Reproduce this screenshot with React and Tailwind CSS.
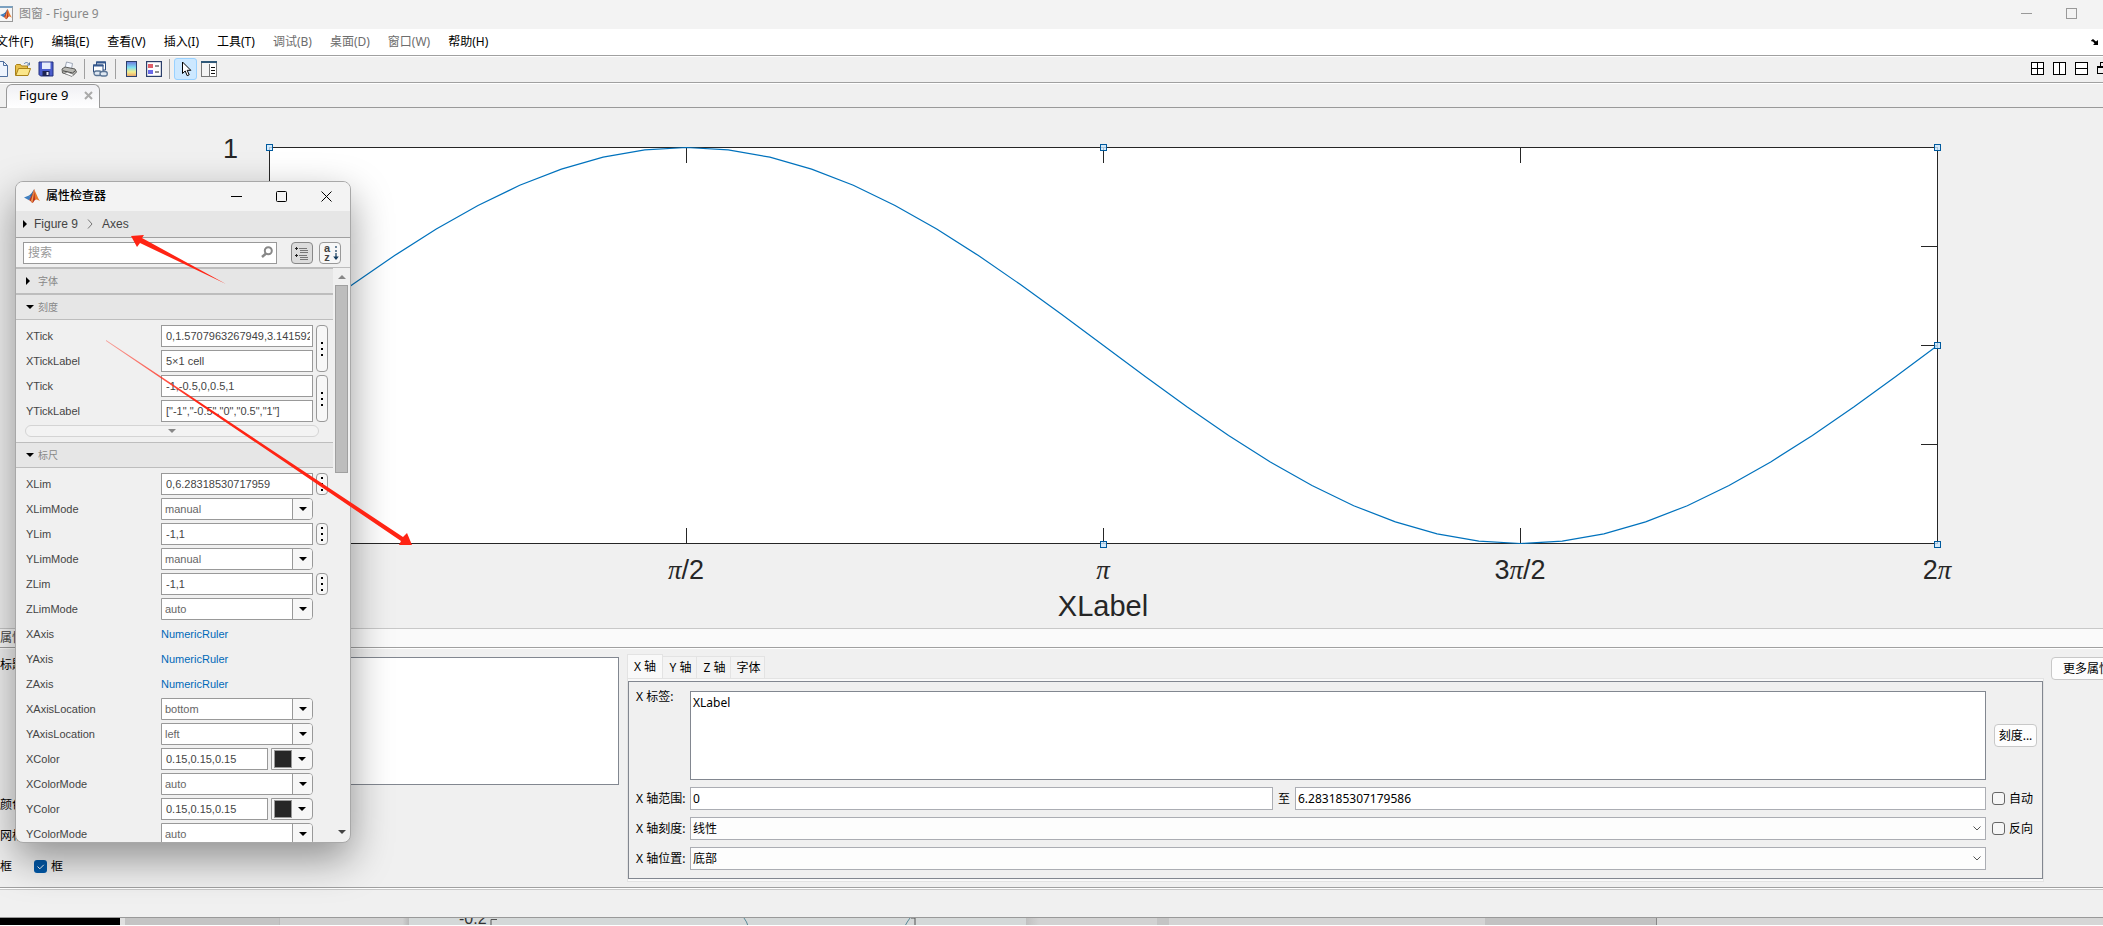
import { useState } from 'react';

const menus = [
  { label: '文件(F)' },
  { label: '编辑(E)' },
  { label: '查看(V)' },
  { label: '插入(I)' },
  { label: '工具(T)' },
  { label: '调试(B)', disabled: true },
  { label: '桌面(D)', disabled: true },
  { label: '窗口(W)', disabled: true },
  { label: '帮助(H)' },
];

// each unit is one or two rows that share a "more" button
const tickUnits = [
  { more: true, rows: [{ name: 'XTick', value: '0,1.5707963267949,3.14159265358979' }, { name: 'XTickLabel', value: '5×1 cell' }] },
  { more: true, rows: [{ name: 'YTick', value: '-1,-0.5,0,0.5,1' }, { name: 'YTickLabel', value: '["-1","-0.5","0","0.5","1"]' }] },
];

const rulerUnits = [
  { more: true, rows: [{ name: 'XLim', value: '0,6.28318530717959' }] },
  { rows: [{ name: 'XLimMode', value: 'manual', type: 'select' }] },
  { more: true, rows: [{ name: 'YLim', value: '-1,1' }] },
  { rows: [{ name: 'YLimMode', value: 'manual', type: 'select' }] },
  { more: true, rows: [{ name: 'ZLim', value: '-1,1' }] },
  { rows: [{ name: 'ZLimMode', value: 'auto', type: 'select' }] },
  { rows: [{ name: 'XAxis', value: 'NumericRuler', type: 'link' }] },
  { rows: [{ name: 'YAxis', value: 'NumericRuler', type: 'link' }] },
  { rows: [{ name: 'ZAxis', value: 'NumericRuler', type: 'link' }] },
  { rows: [{ name: 'XAxisLocation', value: 'bottom', type: 'select' }] },
  { rows: [{ name: 'YAxisLocation', value: 'left', type: 'select' }] },
  { rows: [{ name: 'XColor', value: '0.15,0.15,0.15', type: 'color' }] },
  { rows: [{ name: 'XColorMode', value: 'auto', type: 'select' }] },
  { rows: [{ name: 'YColor', value: '0.15,0.15,0.15', type: 'color' }] },
  { rows: [{ name: 'YColorMode', value: 'auto', type: 'select' }] },
];

// plot box in svg units
const L = 269, R = 1937, T = 39, B = 435;
const W = R - L, MID = (T + B) / 2;
const curve = Array.from({ length: 41 }, (_, i) => {
  const x = L + (W * i) / 40;
  const y = MID - Math.sin((i * Math.PI) / 20) * ((B - T) / 2);
  return `${x.toFixed(1)},${y.toFixed(1)}`;
}).join(' ');

function MatlabLogo({ className }) {
  return (
    <svg viewBox="0 0 16 16" className={className}>
      <path d="M0 9.4 5 7.4 7.3 9.8 5 12.2Z" fill="#3f7fc0" />
      <path d="M5 7.4C7.3 6.6 8.6 3 10.2 1L7.3 9.8Z" fill="#2f6fa8" />
      <path d="M10.2 1C8.9 4 8 8 5 12.2 6.6 12 7.6 15 8.4 15 10 14.500 10.500 11.600 11.800 11.200Z" fill="#b8341f" />
      <path d="M10.2 1C11.500 4 13.600 9.500 16 13.200 14 11.800 12.800 10.800 11 11.800Z" fill="#e8792b" />
      <path d="M10.2 1 9.600 7.500 8.4 15 7 13Z" fill="#f2a052" />
    </svg>
  );
}

function Caret({ className }) {
  return <svg viewBox="0 0 8 4" className={`h-1 w-2 ${className || ''}`}><path d="M0 0h8L4 4Z" fill="currentColor" /></svg>;
}

function CaretRight() {
  return <svg viewBox="0 0 4 8" className="h-2 w-1"><path d="M0 0v8L4 4Z" fill="#000" /></svg>;
}

function Dots() {
  return (
    <svg viewBox="0 0 2 14" className="h-3.5 w-0.5" shapeRendering="crispEdges">
      <path d="M0 0h2v2H0zM0 6h2v2H0zM0 12h2v2H0z" fill="#000" />
    </svg>
  );
}

function Toolbar() {
  const sep = <span className="h-5 w-px bg-[#a0a0a0]" />;
  return (
    <div className="flex h-[27px] items-center gap-[7px] border-b border-[#a0a0a0] border-t border-t-white bg-[#f0f0f0] pb-0.5">
      <button aria-label="新建" className="w-2">
        <svg viewBox="0 0 8 16" className="h-4 w-2"><path d="M0 .5h3.500l4 4v11H0" fill="#eef4fd" stroke="#4f6f9f" /><path d="M3.500.5v4h4" fill="none" stroke="#4f6f9f" /></svg>
      </button>
      <button aria-label="打开">
        <svg viewBox="0 0 16 16" className="size-4">
          <path d="M.5 14.500v-10l1-1h4l1 1.500h6v3" fill="#e8c04c" stroke="#a98118" />
          <path d="M.8 14.500 3.500 7.500h12l-2.500 7Z" fill="#fbe68a" stroke="#a98118" />
          <path d="M9 3c1.500-2 4-2 5 .5M14.500 1.500V4H12" fill="none" stroke="#5a7ca8" />
        </svg>
      </button>
      <button aria-label="保存">
        <svg viewBox="0 0 16 16" className="size-4">
          <path d="M1 1h14v14H2.500L1 13.500Z" fill="#4a5ccc" stroke="#23307f" />
          <path d="M4 1.500h8.500v6.500H4Z" fill="#e6edfc" />
          <path d="M4.500 10h7v5h-7Z" fill="#1d2350" /><path d="M8.500 11h2v3h-2Z" fill="#e8e8f8" />
        </svg>
      </button>
      <button aria-label="打印">
        <svg viewBox="0 0 16 16" className="size-4">
          <path d="M4 7 5.500 1l6 1.500L10.500 8Z" fill="#f4f8ff" stroke="#8a94a4" strokeWidth=".8" />
          <path d="M1 8 4 6l10 2 1.500 3L12 14.500 1.500 12Z" fill="#b9b9b4" stroke="#5d5d5a" />
          <path d="M2 9.800 11.500 12 14.500 9.500" fill="none" stroke="#474745" />
          <path d="m3.500 12.500 7.500 3 2-2-7-2.500Z" fill="#fff" stroke="#666" strokeWidth=".7" />
        </svg>
      </button>
      {sep}
      <button aria-label="链接绘图">
        <svg viewBox="0 0 16 16" className="size-4">
          <path d="M4.500 1h9v8h-9Z" fill="#fff" stroke="#2b4a7d" /><path d="M4 .5h10v2H4Z" fill="#35588f" />
          <path d="M1.500 4h9.500v7H1.500Z" fill="#fff" stroke="#2b4a7d" /><path d="M1 3.500h10.500v2H1Z" fill="#35588f" />
          <rect x="2" y="10" width="7.500" height="4.500" rx="2.200" fill="#dfe8f2" stroke="#5b7595" strokeWidth="1.300" />
          <rect x="8" y="10.500" width="7.300" height="4.500" rx="2.200" fill="#dfe8f2" stroke="#5b7595" strokeWidth="1.300" />
        </svg>
      </button>
      {sep}
      <button aria-label="插入颜色栏">
        <svg viewBox="0 0 16 16" className="size-4">
          <defs>
            <linearGradient id="jet" x1="0" y1="0" x2="0" y2="1">
              <stop offset="0" stopColor="#6a76dc" /><stop offset=".4" stopColor="#7fe0f0" /><stop offset=".7" stopColor="#f4ee8c" /><stop offset="1" stopColor="#e8a06a" />
            </linearGradient>
          </defs>
          <rect x="3.500" y=".5" width="10" height="15" fill="url(#jet)" stroke="#2b3f6b" />
        </svg>
      </button>
      <button aria-label="插入图例">
        <svg viewBox="0 0 16 16" className="size-4">
          <rect x=".6" y=".6" width="14.800" height="14.800" fill="#fff" stroke="#2b3f6b" strokeWidth="1.200" />
          <path d="M2 3h5v4H2z" fill="#e0606a" /><path d="M2 9h5v4H2z" fill="#6a6ae8" /><path d="M9 5h4M9 11h4" stroke="#222" />
        </svg>
      </button>
      {sep}
      <button aria-label="编辑绘图" className="-mx-[3px] flex h-[22px] w-[23px] items-center justify-center rounded-[3px] border border-[#99d1ff] bg-[#cce8ff]">
        <svg viewBox="0 0 12 16" className="h-4 w-3"><path d="M2.500 1v11.500l2.700-2.500 2 4.700 2-.9-2-4.500h3.600Z" fill="#fff" stroke="#000" /></svg>
      </button>
      <button aria-label="属性检查器">
        <svg viewBox="0 0 16 16" className="size-4" shapeRendering="crispEdges">
          <path d="M.5.5h15v15H.5z" fill="#f4f4f4" stroke="#777" /><path d="M0 0h16v2H0z" fill="#2f5878" />
          <path d="M9 3h6v12H9z" fill="#fff" /><path d="M8.500 3v12" stroke="#777" /><path d="M10 6.500h4M10 9.500h4M10 12.500h4" stroke="#111" />
        </svg>
      </button>
      <div className="ml-auto flex gap-[9px]">
        <button aria-label="平铺"><svg viewBox="0 0 13 13" className="size-[13px]" shapeRendering="crispEdges"><path d="M.5.5h12v12H.5zM6.500 0v13M0 6.500h13" fill="#fff" stroke="#000" /></svg></button>
        <button aria-label="左右平铺"><svg viewBox="0 0 13 13" className="size-[13px]" shapeRendering="crispEdges"><path d="M.5.5h12v12H.5zM6.500 0v13" fill="#fff" stroke="#000" /></svg></button>
        <button aria-label="上下平铺"><svg viewBox="0 0 13 13" className="size-[13px]" shapeRendering="crispEdges"><path d="M.5.5h12v12H.5zM0 6.500h13" fill="#fff" stroke="#000" /></svg></button>
        <button aria-label="浮动"><svg viewBox="0 0 6 13" className="h-[13px] w-1.5" shapeRendering="crispEdges"><path d="M6 .5H3.500v4M.5 11.500V5.500H6M.5 11.500H6" fill="none" stroke="#000" /><path d="M0 4h6v2H0z" /></svg></button>
      </div>
    </div>
  );
}

function Plot() {
  const xs = [1, 2, 3].map(i => L + (W * i) / 4);
  const ys = [1, 2, 3].map(i => T + ((B - T) * i) / 4);
  const handles = [[L, T], [xs[1], T], [R, T], [R, MID], [xs[1], B + 1], [R, B + 1]];
  const pi = <tspan className="font-['Liberation_Serif',serif] italic">π</tspan>;
  return (
    <svg viewBox="0 0 2103 520" className="block w-full bg-[#f0f0f0] font-['Liberation_Sans',sans-serif]">
      <rect x={L} y={T} width={W} height={B - T} fill="#fff" />
      <g stroke="#262626" fill="none" shapeRendering="crispEdges">
        <rect x={L + 0.5} y={T + 0.5} width={W} height={B - T} />
        {xs.map(x => <path key={x} d={`M${x + 0.5} ${T}v16M${x + 0.5} ${B}v-15`} />)}
        {ys.map(y => <path key={y} d={`M${R} ${y + 0.5}h-16M${L} ${y + 0.5}h16`} />)}
      </g>
      <polyline points={curve} fill="none" stroke="#0072bd" strokeWidth="1.2" transform="translate(.5 .5)" />
      {handles.map(([x, y]) => (
        <rect key={`${x}-${y}`} x={x - 2.5} y={y - 2.5} width="6" height="6" fill="#cce8ff" fillOpacity=".8" stroke="#005a9e" />
      ))}
      <g fill="#262626" textAnchor="middle" fontSize="27">
        <text x="238" y="50" textAnchor="end">1</text>
        <text x="686" y="471">{pi}/2</text>
        <text x="1103" y="471">{pi}</text>
        <text x="1520" y="471">3{pi}/2</text>
        <text x="1937" y="471">2{pi}</text>
        <text x="1103" y="508" fontSize="29">XLabel</text>
      </g>
    </svg>
  );
}

function WideSelect({ id, value }) {
  return (
    <div className="relative flex-1">
      <select id={id} defaultValue={value} className="block h-[23px] w-full appearance-none border border-[#abadb3] bg-[#fdfdfd] px-0.5 text-xs">
        <option>{value}</option>
      </select>
      <svg viewBox="0 0 8 5" className="pointer-events-none absolute top-[9px] right-[5px] h-[5px] w-2"><path d="M.5.5 4 4 7.500.5" fill="none" stroke="#555" /></svg>
    </div>
  );
}

function AxisEditor() {
  const [tab, setTab] = useState('X 轴');
  const check = 'size-[13px] appearance-none rounded-[3px] border border-[#666] bg-[#f6f6f6]';
  return (
    <div className="ml-2 flex-1 pt-[5px]">
      <div className="flex items-end">
        {['X 轴', 'Y 轴', 'Z 轴', '字体'].map(t => (
          <button
            key={t}
            onClick={() => setTab(t)}
            className={t === tab
              ? 'h-6 w-9 border border-b-0 border-[#e3e3e3] bg-[#f9f9f9] text-xs'
              : 'h-[22px] w-[34px] border border-l-0 border-[#e3e3e3] border-b-0 bg-[#f3f3f3] pl-0.5 text-xs whitespace-nowrap'}
          >
            {t}
          </button>
        ))}
      </div>
      <div className="border border-[#e3e3e3] bg-[#f9f9f9] pt-0.5 pb-0.5">
        <div className="flex flex-col gap-[7px] border border-[#828790] bg-[#f0f0f0] pt-[9px] pb-2 pl-[7px]">
          <div className="flex">
            <label htmlFor="xlabel" className="w-[54px] text-xs leading-3">X 标签:</label>
            <textarea id="xlabel" defaultValue="XLabel" className="block h-[89px] flex-1 resize-none border border-[#828790] bg-white px-0.5 py-[3px] text-xs leading-4" />
            <div className="flex w-14 items-center pl-2">
              <button className="h-[23px] w-[43px] rounded border border-[#c8c8c8] bg-[#fdfdfd] text-xs whitespace-nowrap">刻度...</button>
            </div>
          </div>
          <div className="flex items-center">
            <label htmlFor="xmin" className="w-[54px] text-xs">X 轴范围:</label>
            <input id="xmin" defaultValue="0" className="h-[23px] flex-1 border border-[#abadb3] bg-white px-0.5 text-xs" />
            <label htmlFor="xmax" className="w-[22px] text-center text-xs">至</label>
            <input id="xmax" defaultValue="6.283185307179586" className="h-[23px] w-[691px] border border-[#abadb3] bg-white px-0.5 text-xs" />
            <label className="flex w-14 items-center gap-1 pl-1.5 text-xs"><input type="checkbox" className={check} />自动</label>
          </div>
          <div className="flex items-center">
            <label htmlFor="xscale" className="w-[54px] text-xs">X 轴刻度:</label>
            <WideSelect id="xscale" value="线性" />
            <label className="flex w-14 items-center gap-1 pl-1.5 text-xs"><input type="checkbox" className={check} />反向</label>
          </div>
          <div className="flex items-center">
            <label htmlFor="xloc" className="w-[54px] text-xs">X 轴位置:</label>
            <WideSelect id="xloc" value="底部" />
            <span className="w-14" />
          </div>
        </div>
      </div>
    </div>
  );
}

function PropertyPanel() {
  return (
    <section>
      <div className="flex h-5 items-center border-t border-b border-t-[#c8c8c8] border-b-[#a0a0a0] bg-[#fafafa] text-xs text-[#444]">属性编辑器</div>
      <div className="flex border-t border-white bg-[#f0f0f0] pb-[5px]">
        <div className="w-[619px] pt-2 text-xs">
          <div className="flex">
            <label htmlFor="title" className="w-[46px]">标题:</label>
            <textarea id="title" className="block h-32 flex-1 resize-none border border-[#828790] bg-white" />
          </div>
          <div className="mt-1 flex h-[31px] items-center">颜色:</div>
          <div className="flex h-[31px] items-center">网格:</div>
          <div className="flex h-[31px] items-center">
            <span className="w-[34px]">框</span>
            <label className="flex items-center gap-1">
              <span className="relative flex">
                <input type="checkbox" defaultChecked className="size-[13px] appearance-none rounded-[3px] bg-[#0058a8]" />
                <svg viewBox="0 0 13 13" className="pointer-events-none absolute inset-0 size-[13px]"><path d="m3.500 6.500 2.300 2.300 4-4" fill="none" stroke="#fff" /></svg>
              </span>
              框
            </label>
          </div>
        </div>
        <AxisEditor />
        <div className="w-[59px] overflow-hidden pt-2 pl-[7px]">
          <button className="block h-[23px] rounded border border-[#c8c8c8] bg-[#fdfdfd] px-[11px] text-xs whitespace-nowrap">更多属性...</button>
        </div>
      </div>
    </section>
  );
}

// what shows of the windows below this one
function DesktopStrip() {
  return (
    <div className="flex h-[7px] overflow-hidden bg-[#d4d4d4]">
      <div className="w-[120px] bg-black" />
      <div className="w-[5px] bg-[#e0e0e0]" />
      <div className="w-[154px] bg-[#c4c4c4]" />
      <div className="w-[130px] border-l border-[#bbb] bg-linear-to-r from-[#d0d0d0] from-95% to-[#b8b8b8]" />
      <svg viewBox="0 0 617 7" className="h-[7px] w-[617px] bg-[#d4d8d8]">
        <text x="50" y="6" fontSize="16" fill="#333" className="font-['Liberation_Sans',sans-serif]">-0.2</text>
        <path d="M82 8V1.500h6M506 0v8M502 0h4" fill="none" stroke="#555" />
        <path d="M335 0q3 4 4 8M501 0q-3 4-5 8" fill="none" stroke="#5a8a98" />
      </svg>
      <div className="w-[131px] bg-linear-to-r from-[#c0c0c0] to-[#d2d2d2] to-10%" />
      <div className="w-3 bg-[#c4c4c4]" />
      <div className="w-[316px] bg-[#d4d4d4]" />
      <div className="w-[172px] border-r border-[#888] bg-[#c2c2c2]" />
      <div className="flex-1 bg-[#d6d6d6]" />
    </div>
  );
}

function Field({ row }) {
  const { name, value, type } = row;
  const box = 'h-[22px] border border-[#999] bg-white pl-1 pr-0.5 text-[11px] text-[#444]';
  if (type === 'link') return <a href="#" id={name} className="w-[152px] text-[11px] text-[#0069b8]">{value}</a>;
  if (type === 'select') {
    return (
      <div className="relative w-[152px]">
        <select id={name} defaultValue={value} className="block h-[22px] w-full appearance-none rounded-r border border-[#999] bg-white px-[3px] text-[11px] text-[#666]">
          <option>{value}</option>
        </select>
        <span className="pointer-events-none absolute top-px right-px flex h-5 w-5 items-center justify-center rounded-r-[3px] border-l border-[#999] bg-[#f7f7f7] text-black"><Caret /></span>
      </div>
    );
  }
  if (type === 'color') {
    return (
      <div className="flex w-[152px] justify-between">
        <input id={name} defaultValue={value} className={`${box} w-[107px]`} />
        <button aria-label={`${name} picker`} className="flex h-[22px] w-[42px] items-center gap-1.5 rounded-r border border-[#999] bg-[#f7f7f7] pl-0.5">
          <span className="size-[18px] border border-[#999] bg-[#262626]" />
          <Caret />
        </button>
      </div>
    );
  }
  return <input id={name} defaultValue={value} className={`${box} w-[152px]`} />;
}

function Units({ units }) {
  return (
    <div className="flex flex-col gap-[3px]">
      {units.map(u => (
        <div key={u.rows[0].name} className="flex gap-[3px] pl-2.5">
          <div className="flex flex-col gap-[3px]">
            {u.rows.map(row => (
              <div key={row.name} className="flex h-[22px] items-center">
                <label htmlFor={row.name} className="w-[135px] text-[11px] text-[#444]">{row.name}</label>
                <Field row={row} />
              </div>
            ))}
          </div>
          {u.more && <button aria-label="更多" className="flex w-3 items-center justify-center rounded border border-[#999] bg-[#f7f7f7]"><Dots /></button>}
        </div>
      ))}
    </div>
  );
}

function SectionHeader({ title, open }) {
  return (
    <button className="flex h-[26px] w-full items-center border-t border-b border-[#bdbdbd] bg-[#e6e6e6] pl-2.5 text-[10px] text-[#888]">
      <span className="flex w-3">{open ? <Caret className="text-black" /> : <CaretRight />}</span>
      {title}
    </button>
  );
}

function Inspector() {
  return (
    <div className="absolute top-[181px] left-[15px] w-[336px] overflow-hidden rounded-lg border border-[#a8a8a8] bg-[#f0f0f0] font-['Liberation_Sans','Noto_Sans_CJK_SC',sans-serif] shadow-[0_16px_40px_rgba(0,0,0,0.4)]">
      <div className="flex h-[29px] items-center bg-[#f3f3f3] pb-px pl-2">
        <MatlabLogo className="size-4" />
        <h2 className="ml-1.5 flex-1 text-xs font-medium text-black">属性检查器</h2>
        <div className="flex gap-[34px] pr-[18px]">
          <button aria-label="最小化"><svg viewBox="0 0 11 11" className="size-[11px]"><path d="M0 5.500h11" stroke="#000" /></svg></button>
          <button aria-label="最大化"><svg viewBox="0 0 11 11" className="size-[11px]"><rect x=".5" y=".5" width="10" height="10" rx="1" fill="none" stroke="#000" /></svg></button>
          <button aria-label="关闭"><svg viewBox="0 0 11 11" className="size-[11px]"><path d="m.5.5 10 10m0-10-10 10" stroke="#000" /></svg></button>
        </div>
      </div>
      <nav className="flex h-[27px] items-center border-b border-[#a0a0a0] bg-[#e6e6e6] pl-[7px] text-xs text-[#444]">
        <CaretRight />
        <a href="#" className="ml-[7px]">Figure 9</a>
        <svg viewBox="0 0 6 10" className="mx-[9px] h-2.5 w-1.5"><path d="m1 .5 4 4.500-4 4.500" fill="none" stroke="#777" /></svg>
        <a href="#">Axes</a>
      </nav>
      <div className="flex h-[30px] items-center border-b border-[#bdbdbd] pl-[7px]">
        <div className="relative w-[254px]">
          <input aria-label="搜索" placeholder="搜索" className="block h-[22px] w-full border border-[#999] bg-white px-1 text-xs placeholder:text-[#999]" />
          <svg viewBox="0 0 12 12" className="pointer-events-none absolute top-1 right-1 size-3"><circle cx="7.300" cy="4.700" r="3.500" fill="none" stroke="#888" strokeWidth="2" /><path d="m5 7.500-4 3.500" stroke="#888" strokeWidth="2.500" /></svg>
        </div>
        <button aria-label="分组" className="ml-3.5 flex size-[22px] items-center justify-center rounded border border-[#888] bg-[#dcdcdc]">
          <svg viewBox="0 0 16 16" className="size-4" shapeRendering="crispEdges"><path d="M1 3.500h3M2.500 2v3M1 10.500h3M2.500 9v3" stroke="#222" /><path d="M5 3.500h8M6 5.500h8M6 7.500h8M5 10.500h8M6 12.500h8M6 14.500h8" stroke="#777" /></svg>
        </button>
        <button aria-label="按字母排序" className="ml-1.5 flex size-[22px] items-center gap-0.5 rounded border border-[#999] bg-[#f7f7f7] pl-[3px]">
          <span className="flex w-2 flex-col text-[11px] leading-[9px] font-bold text-[#444]"><span>a</span><span>z</span></span>
          <svg viewBox="0 0 6 16" className="h-4 w-1.5"><path d="M3 1v2M3 5v2M3 8v6" stroke="#123a5c" strokeWidth="1.200" /><path d="M.2 11.500h5.600L3 15Z" fill="#123a5c" /></svg>
        </button>
      </div>
      <div className="flex h-[574px] overflow-hidden">
        <div className="w-[317px]">
          <SectionHeader title="字体" />
          <SectionHeader title="刻度" open />
          <div className="pt-[5px] pb-[5px]">
            <Units units={tickUnits} />
            <button aria-label="折叠" className="mt-[3px] ml-[9px] flex h-3 w-[294px] items-center justify-center rounded-md border border-[#d4d4d4] bg-[#f3f3f3] text-[#888]"><Caret /></button>
          </div>
          <SectionHeader title="标尺" open />
          <div className="pt-[5px]">
            <Units units={rulerUnits} />
          </div>
        </div>
        <div className="flex flex-1 flex-col items-center">
          <svg viewBox="0 0 8 4" className="mt-[7px] h-1 w-2"><path d="M0 4h8L4 0Z" fill="#888" /></svg>
          <div className="mt-1.5 h-[188px] w-[13px] border border-[#a0a0a0] bg-[#bdbdbd]" />
          <Caret className="mt-auto mb-2 text-[#444]" />
        </div>
      </div>
    </div>
  );
}

function Arrows() {
  return (
    <svg viewBox="0 0 320 320" className="pointer-events-none absolute top-[231px] left-[100px] size-80">
      <defs>
        <linearGradient id="tail" x1="0" y1="0" x2="1" y2="1"><stop offset="0" stopColor="#ff2a1a" stopOpacity=".4" /><stop offset=".3" stopColor="#ff2414" /></linearGradient>
      </defs>
      <path d="M31 5 44 4 42 7 126 53 40 12 37 16Z" fill="#ff2414" />
      <path d="M6 109v1L301 310 299 314 312 314 307 302 303 306Z" fill="url(#tail)" />
    </svg>
  );
}

export default function App() {
  return (
    <div className="relative w-full overflow-hidden bg-[#f0f0f0] font-['Noto_Sans','Noto_Sans_CJK_SC',sans-serif] text-black">
      <header className="flex h-[29px] items-center bg-[#f3f3f3] pb-0.5 text-xs text-[#888]">
        <span className="flex h-4 w-[13px] items-center justify-end border border-l-0 border-[#999] border-t-2 border-t-[#7aa0c0] bg-[#f6f6f6]">
          <MatlabLogo className="size-3" />
        </span>
        <h1 className="ml-1.5 flex-1">图窗 - Figure 9</h1>
        <div className="flex gap-[34px] pr-[26px]">
          <button aria-label="最小化"><svg viewBox="0 0 11 11" className="size-[11px]"><path d="M0 5.500h11" stroke="#999" /></svg></button>
          <button aria-label="最大化"><svg viewBox="0 0 11 11" className="size-[11px]"><rect x=".5" y=".5" width="10" height="10" fill="none" stroke="#999" /></svg></button>
        </div>
      </header>
      <nav className="flex h-[27px] items-center gap-[18px] border-b border-[#a0a0a0] bg-white text-xs">
        {menus.map(m => (
          <button key={m.label} disabled={m.disabled} className="whitespace-nowrap first:-ml-1 disabled:text-[#6d6d6d]">{m.label}</button>
        ))}
        <button aria-label="停靠" className="mr-1 ml-auto">
          <svg viewBox="0 0 8 6" className="h-1.5 w-2"><path d="M0 1.500 2 0l3 2.500L7 1v5H2l1.500-1.500L2 2.500.8 2.500Z" /></svg>
        </button>
      </nav>
      <Toolbar />
      <div className="flex h-[25px] border-t border-b border-t-white border-b-[#999] bg-[#f0f0f0] pl-1.5">
        <div className="-mb-px flex w-[94px] items-center rounded-t-md border border-b-0 border-[#999] bg-linear-to-b from-[#f0f0f4] to-white pb-0.5 pl-3 text-[13px]">
          Figure 9
          <button aria-label="关闭" className="ml-auto mr-1.5"><svg viewBox="0 0 9 9" className="size-[9px]"><path d="m1 1 7 7m0-7L1 8" stroke="#aaa" strokeWidth="2" /></svg></button>
        </div>
      </div>
      <Plot />
      <PropertyPanel />
      <footer>
        <div className="h-[3px] border-t border-b border-t-[#a0a0a0] border-b-[#c8c8c8] bg-white" />
        <div className="h-7 border-b border-[#999] bg-[#f0f0f0]" />
        <DesktopStrip />
      </footer>
      <Inspector />
      <Arrows />
    </div>
  );
}
